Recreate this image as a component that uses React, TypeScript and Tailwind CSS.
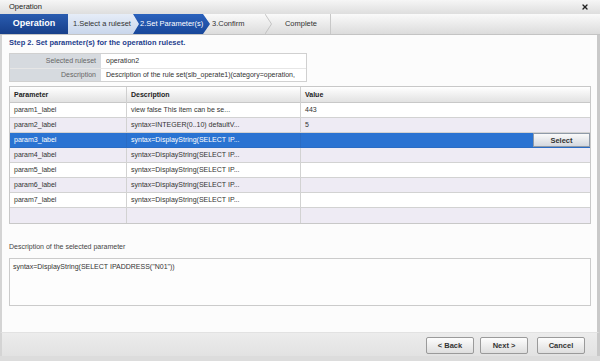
import { X } from "lucide-react";

const params = [
  { name: "param1_label", desc: "view false This item can be se...", value: "443" },
  { name: "param2_label", desc: "syntax=INTEGER(0..10) defaultV...", value: "5" },
  { name: "param3_label", desc: "syntax=DisplayString(SELECT IP...", value: "", selected: true },
  { name: "param4_label", desc: "syntax=DisplayString(SELECT IP...", value: "" },
  { name: "param5_label", desc: "syntax=DisplayString(SELECT IP...", value: "" },
  { name: "param6_label", desc: "syntax=DisplayString(SELECT IP...", value: "" },
  { name: "param7_label", desc: "syntax=DisplayString(SELECT IP...", value: "" },
  { name: "", desc: "", value: "" },
];

const FooterButton = ({ label }: { label: string }) => (
  <button className="h-[17px] w-[48px] rounded-[2px] border border-[#9a9a9a] bg-gradient-to-b from-[#fdfdfd] to-[#dedede] text-[7.5px] font-bold text-[#333]">
    {label}
  </button>
);

const App = () => {
  return (
    <div className="relative flex h-[361px] w-[600px] flex-col overflow-hidden bg-[#fcfcfc] font-['Liberation_Sans',Arial,sans-serif] text-[7px] text-[#333]">
      {/* Window title */}
      <div className="flex h-[14px] items-center justify-between bg-gradient-to-b from-[#f6f6f6] to-[#dedede] pl-[9px] pr-[11px] text-[7.5px] text-[#222]">
        <span>Operation</span>
        <X className="h-[8px] w-[8px]" strokeWidth={4} />
      </div>

      {/* Wizard steps */}
      <div className="flex h-[21px] items-stretch border-b border-[#c4c4c4] bg-gradient-to-b from-[#fafafa] to-[#dcdcdc] pr-[3px]">
        <div className="flex w-[68px] items-center justify-center bg-gradient-to-b from-[#2a5cb0] to-[#173f8a] text-[9px] font-bold text-white">
          Operation
        </div>
        <div className="flex w-[71px] items-center bg-gradient-to-b from-[#e6edf8] to-[#c9d6eb] pl-[5px] text-[7.5px] text-[#333]">
          1.Select a ruleset
        </div>
        <div className="-ml-[6px] flex w-[77px] items-center whitespace-nowrap bg-gradient-to-b from-[#2b62bd] to-[#18479a] pl-[7px] text-[7.5px] text-white [clip-path:polygon(0_0,calc(100%-7px)_0,100%_50%,calc(100%-7px)_100%,0_100%,6px_50%)]">
          2.Set Parameter(s)
        </div>
        <div className="relative flex w-[62px] items-center pl-[2px] text-[7.5px] text-[#333]">
          3.Confirm
          <svg className="absolute right-0 top-0 h-full w-[7px]" viewBox="0 0 7 21" preserveAspectRatio="none">
            <polyline points="0,0 6.5,10.5 0,21" fill="none" stroke="#b8b8b8" strokeWidth="0.8" />
          </svg>
        </div>
        <div className="flex w-[59px] items-center justify-center border-r border-[#c8c8c8] text-[7.5px] text-[#333]">
          Complete
        </div>
        <div className="flex-1" />
      </div>

      {/* Body */}
      <div className="flex flex-1 border-r-[3px] border-l-2 border-r-[#c9c9c9] border-l-[#d4d4d4]">
        <div className="flex flex-1 flex-col pl-[7px] pr-[5px]">
          <div className="mt-[2px] h-[12px] text-[7.5px] font-bold leading-[12px] text-[#1e3c8c]">
            Step 2. Set parameter(s) for the operation ruleset.
          </div>

          {/* Ruleset info */}
          <div className="mt-[4px] grid w-[298px] grid-cols-[91px_1fr] border border-[#d0d0d0]">
            <div className="h-[14px] bg-[#d6dadf] pr-[5px] text-right leading-[14px] text-[#666]">Selected ruleset</div>
            <div className="h-[14px] bg-white pl-[5px] leading-[14px]">operation2</div>
            <div className="h-[13px] border-t border-[#e6e6e6] bg-[#d6dadf] pr-[5px] text-right leading-[12px] text-[#666]">Description</div>
            <div className="h-[13px] overflow-hidden whitespace-nowrap border-t border-[#e6e6e6] bg-white pl-[5px] leading-[12px]">
              Description of the rule set(slb_operate1)(category=operation,
            </div>
          </div>

          {/* Parameter table */}
          <div className="mt-[4px] w-[582px] border border-[#c8c8c8]">
            <div className="grid h-[16px] grid-cols-[117px_174px_1fr] border-b border-[#c8c8c8] bg-gradient-to-b from-[#ffffff] to-[#e2e2e2] font-bold text-[#222]">
              <div className="border-r border-[#cfcfcf] pl-[4px] leading-[16px]">Parameter</div>
              <div className="border-r border-[#cfcfcf] pl-[4px] leading-[16px]">Description</div>
              <div className="pl-[4px] leading-[16px]">Value</div>
            </div>
            {params.map((p, i) => (
              <div
                key={i}
                className={`grid h-[15px] grid-cols-[117px_174px_1fr] ${i < params.length - 1 ? "border-b" : ""} ${
                  p.selected
                    ? "border-[#2a6cc4] bg-[#2a73d2] text-white"
                    : i % 2 === 0
                    ? "border-[#d2d2d2] bg-white"
                    : "border-[#d2d2d2] bg-[#eeebf4]"
                }`}
              >
                <div className={`border-r pl-[4px] leading-[14px] ${p.selected ? "border-[#2a6cc4]" : "border-[#d2d2d2]"}`}>{p.name}</div>
                <div className={`border-r pl-[4px] leading-[14px] ${p.selected ? "border-[#2a6cc4]" : "border-[#d2d2d2]"}`}>{p.desc}</div>
                <div className="flex items-center justify-between pl-[4px] leading-[14px]">
                  <span>{p.value}</span>
                  {p.selected && (
                    <button className="h-[14px] w-[57px] border border-[#8e9aa8] bg-gradient-to-b from-[#fafafa] to-[#d4d8de] text-[7.5px] font-bold text-[#333]">
                      Select
                    </button>
                  )}
                </div>
              </div>
            ))}
          </div>

          <div className="mt-[18px] h-[10px] leading-[10px] text-[#444]">Description of the selected parameter</div>
          <div className="mt-[6px] h-[48px] w-[582px] border border-[#cbcbcb] bg-[#fdfdfd] pl-[3px] pt-[3px] leading-[10px] text-[#333]">
            syntax=DisplayString(SELECT IPADDRESS("N01"))
          </div>
        </div>
      </div>

      {/* Footer */}
      <div className="flex h-[24px] items-start justify-end border-t border-[#e2e2e2] border-r-[3px] border-l-2 border-r-[#c9c9c9] border-l-[#d4d4d4] bg-gradient-to-b from-[#ececec] to-[#e2e2e2] pr-[12px] pt-[4px]">
        <FooterButton label="< Back" />
        <div className="w-[6px]" />
        <FooterButton label="Next >" />
        <div className="w-[9px]" />
        <FooterButton label="Cancel" />
      </div>
      <div className="h-[5px] bg-[#dcdcdc]" />
    </div>
  );
};

export default App;
